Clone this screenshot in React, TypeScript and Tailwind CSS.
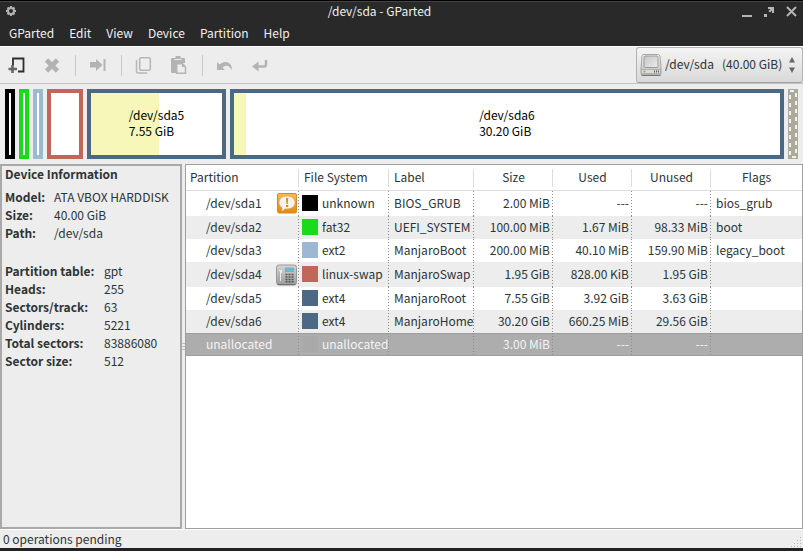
import type { ReactNode } from "react";

type Partition = {
  name: string;
  icon?: "warning" | "keypad";
  color: string;
  fs: string;
  label: string;
  size: string;
  used: string;
  unused: string;
  flags: string;
  selected?: boolean;
};

const partitions: Partition[] = [
  { name: "/dev/sda1", icon: "warning", color: "bg-black", fs: "unknown", label: "BIOS_GRUB", size: "2.00 MiB", used: "---", unused: "---", flags: "bios_grub" },
  { name: "/dev/sda2", color: "bg-[#1adb1a]", fs: "fat32", label: "UEFI_SYSTEM", size: "100.00 MiB", used: "1.67 MiB", unused: "98.33 MiB", flags: "boot" },
  { name: "/dev/sda3", color: "bg-[#9db8d2]", fs: "ext2", label: "ManjaroBoot", size: "200.00 MiB", used: "40.10 MiB", unused: "159.90 MiB", flags: "legacy_boot" },
  { name: "/dev/sda4", icon: "keypad", color: "bg-[#c1665a]", fs: "linux-swap", label: "ManjaroSwap", size: "1.95 GiB", used: "828.00 KiB", unused: "1.95 GiB", flags: "" },
  { name: "/dev/sda5", color: "bg-[#4b6983]", fs: "ext4", label: "ManjaroRoot", size: "7.55 GiB", used: "3.92 GiB", unused: "3.63 GiB", flags: "" },
  { name: "/dev/sda6", color: "bg-[#4b6983]", fs: "ext4", label: "ManjaroHome", size: "30.20 GiB", used: "660.25 MiB", unused: "29.56 GiB", flags: "" },
  { name: "unallocated", color: "bg-[#a9a9a9]", fs: "unallocated", label: "", size: "3.00 MiB", used: "---", unused: "---", flags: "", selected: true },
];

const disk = [
  ["Model:", "ATA VBOX HARDDISK"],
  ["Size:", "40.00 GiB"],
  ["Path:", "/dev/sda"],
];

const geometry = [
  ["Partition table:", "gpt"],
  ["Heads:", "255"],
  ["Sectors/track:", "63"],
  ["Cylinders:", "5221"],
  ["Total sectors:", "83886080"],
  ["Sector size:", "512"],
];

function WarningIcon() {
  return (
    <svg width="20" height="21" viewBox="0 0 20 21" aria-hidden="true">
      <defs>
        <linearGradient id="warn" x2="0" y2="1">
          <stop stopColor="#f7bd55" />
          <stop offset="1" stopColor="#e08a12" />
        </linearGradient>
      </defs>
      <rect x=".5" y=".5" width="19" height="19.5" rx="1.5" fill="url(#warn)" stroke="#cf8a2b" />
      <path d="M10 3c4.600 0 8 2.800 8 6.500S14.600 16 10 16c-.7 0-1.400-.1-2-.2C7 17.200 5.500 18 4 18c.8-.8 1.200-2 1-3.200C3.200 13.600 2 11.700 2 9.500 2 5.800 5.400 3 10 3z" fill="#f4f3ef" stroke="#d89a45" strokeWidth=".6" />
      <path d="M9 5h2.200l-.5 6H9.500z" fill="#d58a1b" />
      <rect x="9" y="12" width="2.200" height="2" fill="#d58a1b" />
    </svg>
  );
}

function KeypadIcon() {
  return (
    <svg width="21" height="22" viewBox="0 0 21 22" aria-hidden="true">
      <defs>
        <linearGradient id="pad" x2="0" y2="1">
          <stop stopColor="#d4d4d4" />
          <stop offset="1" stopColor="#9c9c9c" />
        </linearGradient>
      </defs>
      <rect x=".5" y="1" width="20" height="20" rx="2.500" fill="url(#pad)" stroke="#999" />
      <path d="M1.500 20.500h18" stroke="#707070" />
      <rect x="9.500" y="4" width="8" height="3.500" fill="#55c3dc" stroke="#8b9da2" strokeWidth=".7" />
      <path d="M4.500 6.500v10" stroke="#8c8c8c" strokeWidth="2.200" strokeLinecap="round" />
      <path d="M3.500 6.500h2v2M4.500 6.500v10" stroke="#ececec" strokeWidth="1.400" fill="none" strokeLinecap="round" />
      <path d="M9.500 10.500h8M9.500 13h8M9.500 15.500h8M9.500 17.800h8" stroke="#555" strokeWidth="1.500" strokeDasharray="2 1" />
    </svg>
  );
}

function DriveIcon() {
  return (
    <svg width="22" height="24" viewBox="0 0 22 24" aria-hidden="true">
      <defs>
        <linearGradient id="drive" x2="0" y2="1">
          <stop stopColor="#f7f7f7" />
          <stop offset="1" stopColor="#bdbdbd" />
        </linearGradient>
        <linearGradient id="platter" x2="1" y2="1">
          <stop stopColor="#c6c6c6" />
          <stop offset="1" stopColor="#ececec" />
        </linearGradient>
      </defs>
      <path d="M3 1.500h15.500L20 3l1 13v4.500a1.500 1.500 0 0 1-1.500 1.500h-17A1.500 1.500 0 0 1 1 20.500V16L2 3z" fill="url(#drive)" stroke="#a5a5a5" />
      <rect x="4" y="3" width="14" height="11.500" rx="1" fill="url(#platter)" stroke="#999" />
      <path d="M1.500 16.500h19v4h-19z" fill="#dcdcdc" stroke="#a0a0a0" strokeWidth=".7" />
      <circle cx="4.500" cy="18.600" r="1" fill="#6ec52a" />
      <path d="M14 18.500h6" stroke="#555" strokeWidth="2" strokeDasharray="1 1" />
      <path d="M1.500 22.500h19" stroke="#777" />
    </svg>
  );
}

function ToolButton({ label, children, disabled = true }: { label: string; children: ReactNode; disabled?: boolean }) {
  return (
    <button aria-label={label} disabled={disabled} className="flex h-9 w-[35px] items-center justify-center pr-0.5">
      <svg width="18" height="18" viewBox="0 0 18 18" fill="none" aria-hidden="true">
        {children}
      </svg>
    </button>
  );
}

function Separator() {
  return <div className="mx-[5px] h-[21px] w-px bg-[#c9c9c9]" />;
}

function Toolbar() {
  return (
    <div className="flex h-[38px] items-center border-t border-b border-t-white border-b-[#c4c4c4] bg-[#ededed]">
      <ToolButton label="New" disabled={false}>
        <path d="M5 9V2.500h10.500v13H10" stroke="#2e2e2e" strokeWidth="1.800" />
        <path d="M4.500 9v8M.5 13h8.500" stroke="#666" strokeWidth="2.600" />
      </ToolButton>
      <ToolButton label="Delete">
        <path d="M3.500 4l11 11M14.500 4l-11 11" stroke="#b5b3b1" strokeWidth="4.600" />
      </ToolButton>
      <Separator />
      <ToolButton label="Resize/Move">
        <path d="M1 6h6V3l6.500 6L7 15v-3.500H1z" fill="#b5b3b1" />
        <path d="M15.500 3v12" stroke="#b5b3b1" strokeWidth="2" />
      </ToolButton>
      <Separator />
      <ToolButton label="Copy">
        <rect x="4.700" y="1.700" width="10.600" height="12.600" rx="1.500" stroke="#b9b7b5" strokeWidth="1.600" />
        <path d="M1.500 4v11.500c0 1 .5 1.500 1.500 1.500h9" stroke="#b9b7b5" strokeWidth="1.500" />
      </ToolButton>
      <ToolButton label="Paste">
        <path d="M2 2h3.500V0h5v2H14a1 1 0 0 1 1 1v4H6v10H2a1 1 0 0 1-1-1V3a1 1 0 0 1 1-1z" fill="#b5b3b1" />
        <path d="M4.500 3.500h7" stroke="#ededed" />
        <path d="M6.700 7.700h5.800l3 3v6.600H6.700z" fill="#ededed" stroke="#b5b3b1" strokeWidth="1.500" />
        <path d="M12 7v4h4z" fill="#b5b3b1" />
      </ToolButton>
      <Separator />
      <ToolButton label="Undo">
        <path d="M1 6v8h8l-2.500-2.500C9.500 8.500 13 9 16 14c0-5-2.500-8-6.500-8C7 6 5 7 3.700 8.600z" fill="#b5b3b1" />
      </ToolButton>
      <ToolButton label="Apply">
        <path d="M15 4v4.500c0 1.500-.5 2-2 2H6" stroke="#b5b3b1" strokeWidth="2.400" />
        <path d="M1 10.500L7.500 5.500v10z" fill="#b5b3b1" />
      </ToolButton>
      <div className="relative ml-auto h-9 w-[167px]">
        <select
          aria-label="Device"
          className="h-full w-full appearance-none rounded-[3px] border border-[#b3b3b3] border-b-[#a0a0a0] bg-linear-to-b from-[#f4f4f4] to-[#d9d9d9] pb-0.5 pl-7 text-[#2e3436]"
        >
          <option>{"/dev/sda\u00a0\u00a0\u00a0(40.00 GiB)"}</option>
        </select>
        <div className="pointer-events-none absolute inset-y-0 left-1 flex items-center">
          <DriveIcon />
        </div>
        <div className="pointer-events-none absolute inset-y-0 right-2 flex items-center">
          <svg width="6" height="16" viewBox="0 0 6 16" fill="#666" aria-hidden="true">
            <path d="M3 0l3 5.500H0zM3 16l3-5.500H0z" />
          </svg>
        </div>
      </div>
    </div>
  );
}

function DiskMap() {
  return (
    <div className="flex h-20 gap-1 p-[5px] leading-4 text-black">
      <div className="h-[70px] w-2.5 border-4 border-black bg-white" />
      <div className="h-[70px] w-2.5 border-4 border-[#1adb1a] bg-white" />
      <div className="h-[70px] w-2.5 border-4 border-[#9db8d2] bg-white" />
      <div className="h-[70px] w-9 border-4 border-[#c1665a] bg-white" />
      <div className="flex h-[70px] w-[139px] items-center justify-center border-4 border-[#4b6983] bg-linear-to-r from-[#f7f7b9] from-52% to-white to-52% pb-0.5">
        <p>
          /dev/sda5
          <br />
          7.55 GiB
        </p>
      </div>
      <div className="flex h-[70px] flex-1 items-center justify-center border-4 border-[#4b6983] bg-linear-to-r from-[#f7f7b9] from-[12px] to-white to-[12px] pb-0.5">
        <p>
          /dev/sda6
          <br />
          30.20 GiB
        </p>
      </div>
      <svg width="10" height="70" viewBox="0 0 10 70" aria-hidden="true">
        <rect width="10" height="70" fill="#a9a9a9" />
        <path d="M2 6v60" stroke="#f7f7b9" strokeWidth="2" strokeDasharray="4 4" />
        <path d="M8 4v60" stroke="#f7f7b9" strokeWidth="2" strokeDasharray="4 4" />
        <path d="M2 2h4M4 68h4" stroke="#f7f7b9" strokeWidth="2" />
      </svg>
    </div>
  );
}

function DeviceInfo() {
  return (
    <aside className="w-[182px] shrink-0 border-2 border-[#a9a9a9] pl-[3px] leading-[18px]">
      <h2 className="mb-1.5 leading-4 font-bold">Device Information</h2>
      <dl className="mb-5 grid grid-cols-[49px_1fr]">
        {disk.map(([k, v]) => (
          <div key={k} className="contents">
            <dt className="font-bold">{k}</dt>
            <dd className="whitespace-nowrap">{v}</dd>
          </div>
        ))}
      </dl>
      <dl className="grid grid-cols-[99px_1fr]">
        {geometry.map(([k, v]) => (
          <div key={k} className="contents">
            <dt className="font-bold whitespace-nowrap">{k}</dt>
            <dd>{v}</dd>
          </div>
        ))}
      </dl>
    </aside>
  );
}

const dotted =
  "bg-[repeating-linear-gradient(to_bottom,#8c8c8c_0_1px,transparent_1px_3px)] bg-[length:1px_100%] bg-right bg-no-repeat";
const headLine = "bg-[linear-gradient(#dcdcdc,#dcdcdc)] bg-[length:1px_18px] bg-right bg-no-repeat";

function PartitionTable() {
  return (
    <div className="min-w-0 flex-1 border border-[#a0a0a0] bg-white">
      <table className="w-full table-fixed border-separate border-spacing-0 leading-[18px] whitespace-nowrap">
        <colgroup>
          <col className="w-[113px]" />
          <col className="w-[90px]" />
          <col className="w-[85px]" />
          <col className="w-[79px]" />
          <col className="w-[79px]" />
          <col className="w-[79px]" />
          <col />
        </colgroup>
        <thead>
          <tr className="h-[26px] [&>th]:border-b [&>th]:border-[#dedede] [&>th]:p-0 [&>th]:pb-0.5 [&>th]:font-normal">
            <th className={`${headLine} text-left`}><span className="pl-1">Partition</span></th>
            <th className={`${headLine} text-left`}><span className="pl-[5px]">File System</span></th>
            <th className={`${headLine} text-left`}><span className="pl-[5px]">Label</span></th>
            <th className={headLine}>Size</th>
            <th className={headLine}>Used</th>
            <th className={headLine}>Unused</th>
            <th>Flags</th>
          </tr>
        </thead>
        <tbody>
          {partitions.map((p) => (
            <tr
              key={p.name}
              className={`${p.icon ? "h-[25px]" : "h-[23px]"} ${
                p.selected ? "bg-[#adadad] text-[#f4f4f4] shadow-[inset_0_1px_#9e9e9e,inset_0_-1px_#9e9e9e]" : "even:bg-[#ededed]"
              }`}
            >
              <td className={`${dotted} p-0`}>
                <div className="flex h-[22px] items-center justify-between pr-0.5 pl-5">
                  <span className="pb-0.5">{p.name}</span>
                  {p.icon === "warning" && <WarningIcon />}
                  {p.icon === "keypad" && <KeypadIcon />}
                </div>
              </td>
              <td className={`${dotted} p-0 pb-0.5`}>
                <div className="flex items-center gap-1 pl-[3px]">
                  <span className={`size-4 shrink-0 ${p.color}`} />
                  {p.fs}
                </div>
              </td>
              <td className={`${dotted} p-0 pb-0.5 pl-[5px]`}>{p.label}</td>
              <td className={`${dotted} p-0 pr-[3px] pb-0.5 text-right`}>{p.size}</td>
              <td className={`${dotted} p-0 pr-[3px] pb-0.5 text-right`}>{p.used}</td>
              <td className={`${dotted} p-0 pr-[3px] pb-0.5 text-right`}>{p.unused}</td>
              <td className="p-0 pb-0.5 pl-[5px]">{p.flags}</td>
            </tr>
          ))}
        </tbody>
      </table>
    </div>
  );
}

export default function App() {
  return (
    <div className="flex h-screen flex-col border-b-[3px] border-[#222] bg-[#ededed] font-['Noto_Sans_CJK_SC',sans-serif] text-[12px] text-[#2e3436]">
      <header className="border-t border-black bg-[#292929] text-[#f0f0f0]">
        <div className="flex h-[21px] items-center border-t border-[#444] pr-1.5 pb-0.5 pl-[5px]">
          <svg width="12" height="12" viewBox="0 0 12 12" fill="none" stroke="#b5b5b5" aria-hidden="true">
            <circle cx="6" cy="6" r="3" strokeWidth="2" />
            <path d="M6 1v1.500M6 9.500V11M1 6h1.500M9.500 6H11M2.500 2.500l1 1M8.500 8.500l1 1M9.500 2.500l-1 1M3.500 8.500l-1 1" strokeWidth="2" />
          </svg>
          <h1 className="flex-1 text-center leading-[18px]">/dev/sda - GParted</h1>
          <div className="flex gap-[11px]">
            <button aria-label="Minimize">
              <svg width="11" height="11" viewBox="0 0 11 11"><path d="M0 9h10v2H0z" fill="#b5b5b5" /></svg>
            </button>
            <button aria-label="Restore">
              <svg width="11" height="11" viewBox="0 0 11 11" fill="#b5b5b5">
                <path d="M4 1h6v6H8V4.500L6 6.500 4.500 5l2-2H4zM0 8h3v3H0z" />
              </svg>
            </button>
            <button aria-label="Close">
              <svg width="11" height="11" viewBox="0 0 11 11" stroke="#b5b5b5" strokeWidth="2">
                <path d="M1 1l9 9M10 1l-9 9" />
              </svg>
            </button>
          </div>
        </div>
        <nav className="flex h-6 items-center gap-[15px] pb-0.5 pl-[9px] leading-[18px]">
          <button>GParted</button>
          <button>Edit</button>
          <button>View</button>
          <button>Device</button>
          <button>Partition</button>
          <button>Help</button>
        </nav>
      </header>
      <Toolbar />
      <DiskMap />
      <main className="flex min-h-0 flex-1">
        <DeviceInfo />
        <div className="flex w-[3px] shrink-0 flex-col items-center justify-center gap-0.5">
          <span className="h-px w-full bg-[#bbb]" />
          <span className="h-px w-full bg-[#bbb]" />
          <span className="h-px w-full bg-[#bbb]" />
        </div>
        <PartitionTable />
      </main>
      <footer className="flex h-[19px] items-end justify-between border-t border-white pl-[3px]">
        <span className="leading-[18px]">0 operations pending</span>
        <svg width="12" height="12" viewBox="0 0 12 12" fill="#b5b5b5" aria-hidden="true">
          <path d="M9 1h1v1H9zM6 4h1v1H6zM9 4h1v1H9zM3 7h1v1H3zM6 7h1v1H6zM9 7h1v1H9zM0 10h1v1H0zM3 10h1v1H3zM6 10h1v1H6zM9 10h1v1H9z" />
        </svg>
      </footer>
    </div>
  );
}
